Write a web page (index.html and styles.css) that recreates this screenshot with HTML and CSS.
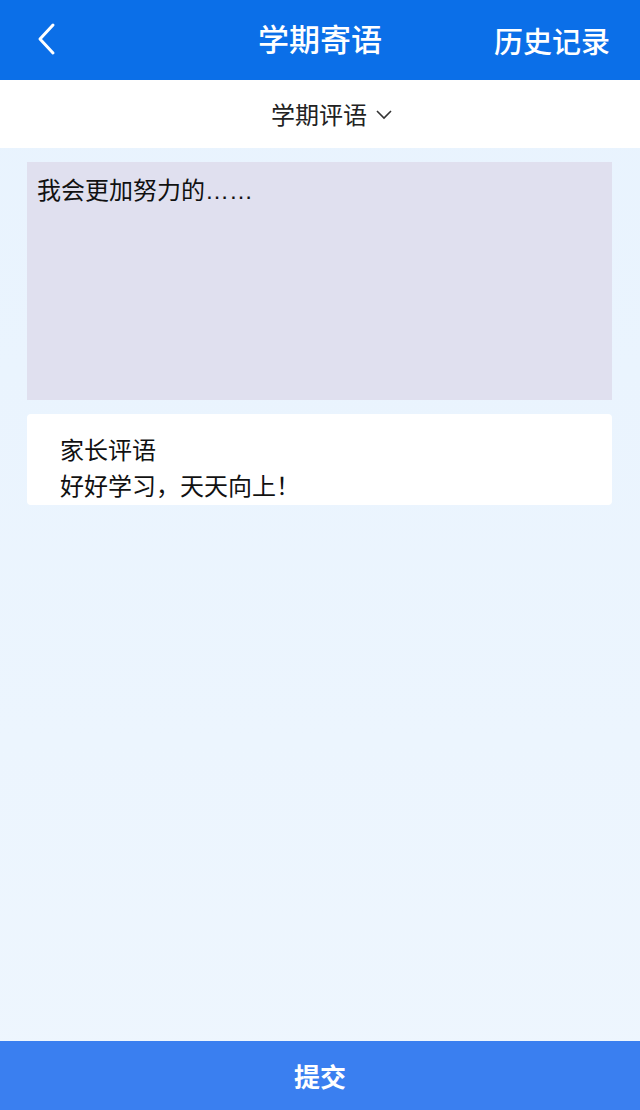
FILE: index.html
```html
<!DOCTYPE html>
<html lang="zh-CN">
<head>
  <meta charset="UTF-8" />
  <meta name="viewport" content="width=device-width, initial-scale=1.0"/>
  <title>学期寄语</title>
  <link rel="stylesheet" href="styles.css">
</head>
<body>

  <div class="page">
    <div class="header">
      <div class="back">
        <svg width="22" height="34" viewBox="0 0 22 34">
          <polyline points="18,3 5,17 18,31" fill="none" stroke="#fff" stroke-width="3" stroke-linecap="round" stroke-linejoin="round"/>
        </svg>
      </div>
      <h2>学期寄语</h2>
      <div class="history">历史记录</div>
    </div>

    <div class="tab-bar">
      <span>学期评语</span>
      <svg width="18" height="12" viewBox="0 0 18 12">
        <polyline points="2,3 9,10 16,3" fill="none" stroke="#333" stroke-width="1.6"/>
      </svg>
    </div>

    <div class="content">
      <div class="comment-box">我会更加努力的……</div>
      <div class="parent-card">
        <div>家长评语</div>
        <div>好好学习，天天向上！</div>
      </div>
    </div>

    <button class="submit">提交</button>
  </div>

</body>
</html>
```

FILE: styles.css
```css
* {
  margin: 0;
  padding: 0;
  box-sizing: border-box;
}

body {
  font-family: "Liberation Sans", "Noto Sans CJK SC", sans-serif;
  background: #eaf4fe;
  color: #111;
}

.page {
  width: 640px;
  height: 1110px;
  display: flex;
  flex-direction: column;
  background: linear-gradient(#e8f3fe, #eef6fe);
}

.header {
  height: 80px;
  background: #0b6fe8;
  color: #fff;
  display: flex;
  align-items: center;
  justify-content: space-between;
  padding: 0 30px 0 35px;
  position: relative;
}

.back {
  width: 22px;
  height: 34px;
  display: flex;
  margin-top: -2px;
}

.header h2 {
  position: absolute;
  left: 0;
  right: 0;
  text-align: center;
  font-size: 31px;
  font-weight: 500;
  line-height: 80px;
  margin-top: 2px;
  pointer-events: none;
}

.history {
  font-size: 29px;
  font-weight: 500;
  margin-top: -1px;
}

.tab-bar {
  height: 68px;
  background: #fff;
  display: flex;
  align-items: center;
  justify-content: center;
  gap: 8px;
  font-size: 24px;
  color: #222;
  padding-left: 24px;
}

.tab-bar span {
  margin-top: -2px;
}

.content {
  flex: 1;
  padding: 14px 28px 0 27px;
  display: flex;
  flex-direction: column;
  gap: 14px;
}

.comment-box {
  height: 238px;
  background: #e0e0ef;
  padding: 14px 10px;
  font-size: 24px;
  line-height: 30px;
  color: #111;
}

.parent-card {
  height: 91px;
  background: #fff;
  border-radius: 4px;
  padding: 19px 33px 0;
  font-size: 24px;
  line-height: 36px;
  color: #111;
}

.submit {
  height: 69px;
  border: none;
  background: #3a7ff0;
  color: #fff;
  font-family: inherit;
  font-size: 26px;
  font-weight: bold;
  cursor: pointer;
}
```
